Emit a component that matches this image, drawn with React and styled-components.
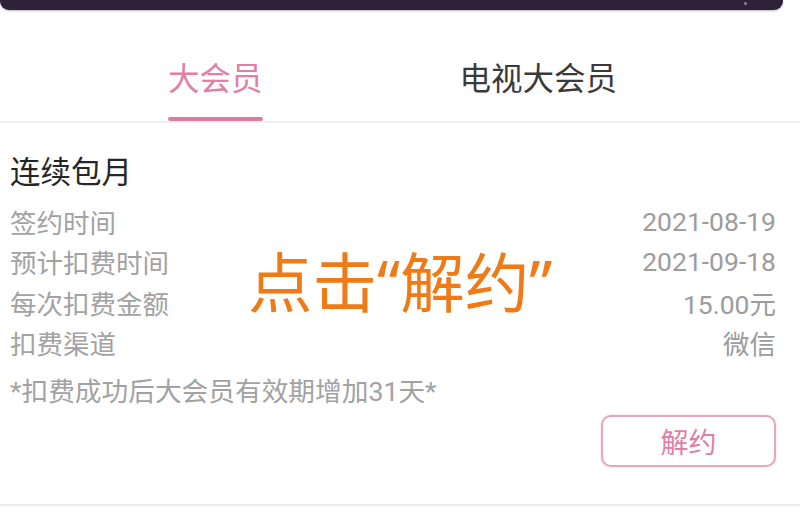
import React from "react";
import styled, { createGlobalStyle } from "styled-components";

const Global = createGlobalStyle`
  html, body { margin: 0; padding: 0; background: #ffffff; }
  body { font-family: "Roboto", "Noto Sans CJK SC", sans-serif; }
`;

const Page = styled.div`
  position: relative;
  width: 800px;
  height: 513px;
  background: #fff;
  overflow: hidden;
  display: flex;
  flex-direction: column;
`;

const TopBar = styled.div`
  position: relative;
  height: 10px;
  width: 783px;
  background: #2e2239;
  border-radius: 0 0 9px 9px;
  box-shadow: 0 1px 2px rgba(60, 40, 70, 0.35);
  flex-shrink: 0;
`;

const Dot = styled.span`
  position: absolute;
  left: 744px;
  top: 2px;
  width: 3px;
  height: 3px;
  border-radius: 50%;
  background: #8a8490;
`;

const TabBar = styled.div`
  display: flex;
  align-items: stretch;
  gap: 197px;
  padding-left: 168px;
  height: 111px;
  border-bottom: 2px solid #efefef;
  flex-shrink: 0;
`;

const Tab = styled.div`
  position: relative;
  display: flex;
  align-items: center;
  padding-top: 20px;
  box-sizing: border-box;
  font-family: "Noto Sans CJK SC", sans-serif;
  font-size: 31.5px;
  color: ${(p) => (p.$active ? "#e27fa5" : "#3a3a3a")};
  &::after {
    content: "";
    display: ${(p) => (p.$active ? "block" : "none")};
    position: absolute;
    left: 0;
    right: 0;
    bottom: 0;
    height: 4px;
    border-radius: 2px;
    background: #df7ba1;
  }
`;

const Card = styled.div`
  display: flex;
  flex-direction: column;
  padding: 27px 24px 0 10px;
  height: 383px;
  box-sizing: border-box;
  border-bottom: 2px solid #ececec;
  flex-shrink: 0;
`;

const Title = styled.div`
  font-family: "Noto Sans CJK SC", sans-serif;
  font-size: 30.5px;
  line-height: 40px;
  color: #262626;
  margin-bottom: 11px;
`;

const Row = styled.div`
  display: flex;
  justify-content: space-between;
  align-items: center;
  height: 40.5px;
  font-size: 26.5px;
`;

const Label = styled.span`
  font-family: "Noto Sans CJK SC", sans-serif;
  color: #a2a2a2;
`;

const Value = styled.span`
  font-family: "Roboto", "Noto Sans CJK SC", sans-serif;
  color: #9c9c9c;
`;

const Note = styled.div`
  margin-top: 9px;
  font-family: "Roboto", "Noto Sans CJK SC", sans-serif;
  font-size: 26.7px;
  line-height: 40px;
  color: #a2a2a2;
`;

const Actions = styled.div`
  display: flex;
  justify-content: flex-end;
  margin-top: 3px;
`;

const Button = styled.button`
  width: 175px;
  height: 52px;
  border: 2px solid #e8a6c0;
  border-radius: 10px;
  background: #fff;
  color: #e07fa5;
  font-family: "Noto Sans CJK SC", sans-serif;
  font-size: 28px;
  padding: 0;
  box-shadow: 0 0 2px rgba(232, 160, 190, 0.6);
`;

const Annotation = styled.div`
  position: absolute;
  left: 248px;
  top: 242px;
  font-family: "Noto Sans", "Noto Sans CJK SC", sans-serif;
  font-size: 64.5px;
  line-height: 80px;
  color: #f07a16;
  white-space: nowrap;
`;

const rows = [
  ["签约时间", "2021-08-19"],
  ["预计扣费时间", "2021-09-18"],
  ["每次扣费金额", "15.00元"],
  ["扣费渠道", "微信"],
];

export default function App() {
  return (
    <>
      <Global />
      <Page>
        <TopBar>
          <Dot />
        </TopBar>
        <TabBar>
          <Tab $active>大会员</Tab>
          <Tab>电视大会员</Tab>
        </TabBar>
        <Card>
          <Title>连续包月</Title>
          {rows.map(([l, v]) => (
            <Row key={l}>
              <Label>{l}</Label>
              <Value>{v}</Value>
            </Row>
          ))}
          <Note>*扣费成功后大会员有效期增加31天*</Note>
          <Actions>
            <Button>解约</Button>
          </Actions>
        </Card>
        <Annotation>点击“解约”</Annotation>
      </Page>
    </>
  );
}
